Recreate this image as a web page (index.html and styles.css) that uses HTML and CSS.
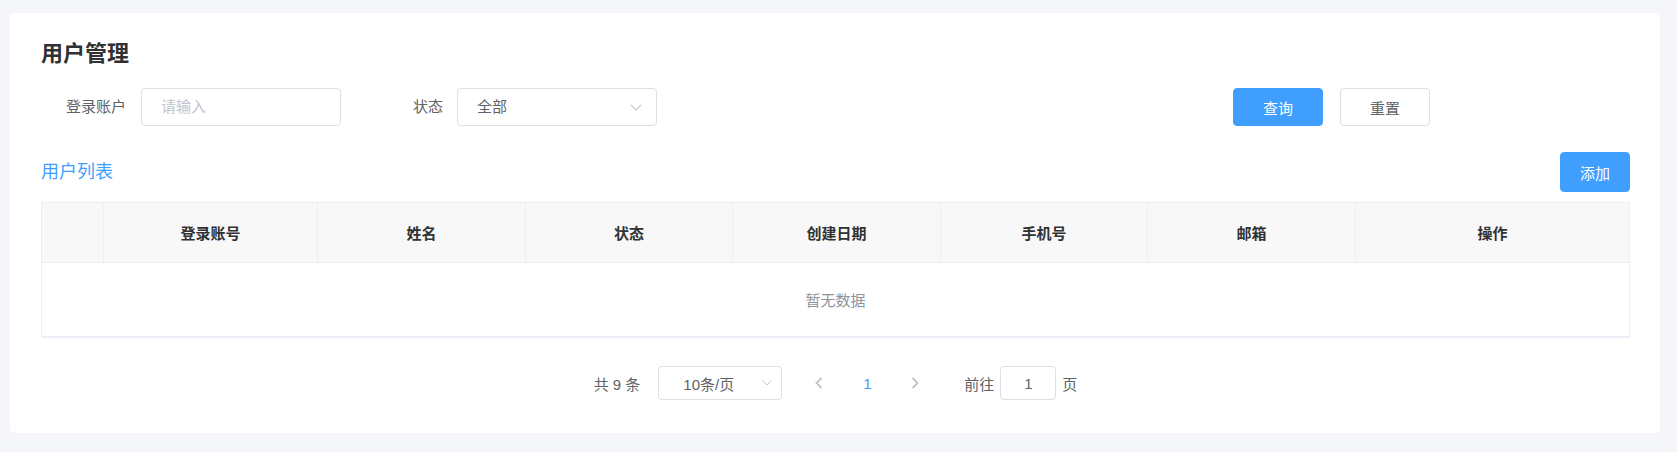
FILE: index.html
```html
<!DOCTYPE html>
<html lang="zh-CN">
<head>
<meta charset="utf-8">
<title>用户管理</title>
<link rel="stylesheet" href="styles.css">
</head>
<body>
<div class="card">
  <h1 class="page-title">用户管理</h1>

  <div class="search-form">
    <div class="form-item">
      <label class="form-label">登录账户</label>
      <div class="input"><span class="placeholder">请输入</span></div>
    </div>
    <div class="form-item item-status">
      <label class="form-label label-status">状态</label>
      <div class="input select">
        <span class="value">全部</span>
        <svg class="chev" width="12" height="7" viewBox="0 0 12 7"><polyline points="0.8,0.8 6,6 11.2,0.8" fill="none" stroke="#c0c4cc" stroke-width="1.1"/></svg>
      </div>
    </div>
    <button class="btn btn-primary btn-query">查询</button>
    <button class="btn btn-default btn-reset">重置</button>
  </div>

  <div class="list-bar">
    <span class="list-title">用户列表</span>
    <button class="btn btn-primary btn-add">添加</button>
  </div>

  <div class="table">
    <div class="thead">
      <div class="th"></div>
      <div class="th">登录账号</div>
      <div class="th">姓名</div>
      <div class="th">状态</div>
      <div class="th">创建日期</div>
      <div class="th">手机号</div>
      <div class="th">邮箱</div>
      <div class="th">操作</div>
    </div>
    <div class="empty">暂无数据</div>
  </div>

  <div class="pagination">
    <span class="total">共 9 条</span>
    <div class="sizes">
      <span>10条/页</span>
      <svg width="10" height="6" viewBox="0 0 10 6"><polyline points="0.6,0.6 5,5 9.4,0.6" fill="none" stroke="#c0c4cc" stroke-width="1"/></svg>
    </div>
    <div class="pager">
      <span class="pg-btn"><svg width="8" height="12" viewBox="0 0 8 12"><polyline points="6.5,1 1.5,6 6.5,11" fill="none" stroke="#c0c4cc" stroke-width="1.8"/></svg></span>
      <span class="pg-btn pg-active">1</span>
      <span class="pg-btn"><svg width="8" height="12" viewBox="0 0 8 12"><polyline points="1.5,1 6.5,6 1.5,11" fill="none" stroke="#c0c4cc" stroke-width="1.8"/></svg></span>
    </div>
    <div class="jump">
      <span>前往</span>
      <div class="jump-box">1</div>
      <span>页</span>
    </div>
  </div>
</div>
</body>
</html>
```

FILE: styles.css
```css
* { box-sizing: border-box; }
html, body { margin: 0; }
body {
  background: #f5f6fa;
  padding: 13px 17px 19px 10px;
  font-family: "Liberation Sans", "Noto Sans CJK SC", sans-serif;
  font-size: 15px;
  color: #606266;
}
.card {
  background: #fff;
  border-radius: 5px;
  padding: 26px 30px 33px 31px;
}
.page-title {
  margin: 0;
  font-size: 22px;
  line-height: 30px;
  font-weight: 700;
  color: #303133;
}
.search-form {
  display: flex;
  align-items: center;
  height: 38px;
  margin-top: 19px;
}
.form-item { display: flex; align-items: center; }
.form-label {
  width: 100px;
  text-align: right;
  padding-right: 15px;
  line-height: 38px;
  color: #606266;
}
.item-status { margin-left: 16px; }
.label-status { padding-right: 14px; }
.input {
  width: 200px;
  height: 38px;
  border: 1px solid #dcdfe6;
  border-radius: 4px;
  padding: 0 19px;
  line-height: 36px;
  display: flex;
  align-items: center;
}
.placeholder { color: #c0c4cc; }
.select { justify-content: space-between; padding-right: 14px; }
.select .value { color: #606266; }
.btn {
  font-family: inherit;
  font-size: 15px;
  border-radius: 4px;
  border: 1px solid transparent;
  padding: 0;
  cursor: pointer;
}
.btn-primary { background: #409eff; border-color: #409eff; color: #fff; }
.btn-default { background: #fff; border-color: #dcdfe6; color: #606266; }
.btn-query { width: 90px; height: 38px; margin-left: 576px; }
.btn-reset { width: 90px; height: 38px; margin-left: 17px; }
.list-bar {
  display: flex;
  align-items: center;
  justify-content: space-between;
  height: 40px;
  margin-top: 26px;
}
.list-title { font-size: 18px; color: #409eff; line-height: 24px; }
.btn-add { width: 70px; height: 40px; }
.table {
  margin-top: 10px;
  border: 1px solid #ebeef5;
  border-bottom-width: 2px;
}
.thead {
  display: grid;
  grid-template-columns: 62px 214px 208px 207px 208px 207px 208px 1fr;
  height: 60px;
  background: #f8f8f9;
  border-bottom: 1px solid #ebeef5;
}
.th {
  display: flex;
  align-items: center;
  justify-content: center;
  border-right: 1px solid #ebeef5;
  font-weight: 700;
  color: #303133;
}
.th:last-child { border-right: none; }
.empty {
  height: 73px;
  display: flex;
  align-items: center;
  justify-content: center;
  color: #909399;
}
.pagination {
  display: flex;
  align-items: center;
  justify-content: center;
  height: 34px;
  margin-top: 28px;
}
.total { margin-right: 18px; }
.sizes {
  width: 124px;
  height: 34px;
  border: 1px solid #dcdfe6;
  border-radius: 4px;
  display: flex;
  align-items: center;
  justify-content: space-between;
  padding: 0 9px 0 24px;
}
.pager {
  display: flex;
  gap: 12px;
  margin-left: 19px;
}
.pg-btn {
  width: 36px;
  height: 34px;
  display: flex;
  align-items: center;
  justify-content: center;
}
.pg-active { color: #409eff; }
.jump {
  display: flex;
  align-items: center;
  margin-left: 31px;
}
.jump-box {
  width: 56px;
  height: 34px;
  margin: 0 6px;
  border: 1px solid #dcdfe6;
  border-radius: 4px;
  display: flex;
  align-items: center;
  justify-content: center;
}
```
